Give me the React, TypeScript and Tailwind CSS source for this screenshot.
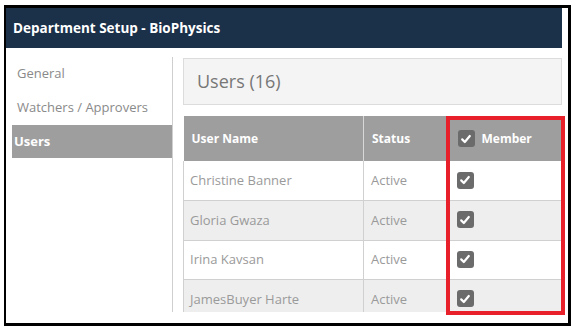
const users = [
  { name: "Christine Banner", status: "Active" },
  { name: "Gloria Gwaza", status: "Active" },
  { name: "Irina Kavsan", status: "Active" },
  { name: "JamesBuyer Harte", status: "Active" },
];

function CheckBox() {
  return (
    <span className="inline-flex h-[17px] w-[17px] items-center justify-center rounded-[3px] bg-[#6b6b6b]">
      <svg width="12" height="12" viewBox="0 0 12 12" fill="none">
        <path d="M2.2 6.4 L4.8 9 L9.8 3" stroke="white" strokeWidth="2.2" strokeLinecap="round" strokeLinejoin="round" />
      </svg>
    </span>
  );
}

export default function App() {
  return (
    <div className="relative h-[336px] w-[576px] overflow-hidden bg-white pl-[4px] pt-[5px] font-['Open_Sans',sans-serif]">
      <div className="h-[321px] w-[567px] border-b-[3px] border-l-2 border-r-[3px] border-t-[3px] border-black pr-[6px]">
        <div className="flex h-[40px] items-center bg-[#1b3049] pl-[7px] text-[13.5px] font-bold text-white">
          Department Setup - BioPhysics
        </div>

        <div className="flex h-[275px] pb-[11px] pt-[9px]">
          <div className="ml-[6px] w-[161px] border-r border-[#cfcfcf] text-[13px] text-[#8a8a8a]">
            <div className="flex h-[34px] items-center pl-[5px]">General</div>
            <div className="flex h-[34px] items-center pl-[5px]">Watchers / Approvers</div>
            <div className="flex h-[33px] items-center bg-[#9e9e9e] pl-[2px] font-bold text-white">Users</div>
          </div>

          <div className="ml-[10px] w-[379px] overflow-hidden pt-px">
            <div className="flex h-[47px] items-center border border-[#dcdcdc] bg-[#f4f4f4] pl-[13px] text-[18px] text-[#777]">
              Users (16)
            </div>

            <table className="mt-[11px] w-[379px] table-fixed border-collapse text-[13px]">
              <colgroup>
                <col className="w-[180px]" />
                <col className="w-[84px]" />
                <col className="w-[115px]" />
              </colgroup>
              <thead>
                <tr className="h-[45px] bg-[#9e9e9e] text-left text-[12px] font-bold text-white">
                  <th className="pl-[8px]">User Name</th>
                  <th className="border-l border-[#d8d8d8] pl-[8px]">Status</th>
                  <th className="pl-[10px]">
                    <span className="flex items-center gap-[7px]">
                      <CheckBox />
                      Member
                    </span>
                  </th>
                </tr>
              </thead>
              <tbody className="text-[#9a9a9a]">
                {users.map((u, i) => (
                  <tr
                    key={u.name}
                    className={`h-[39.5px] border-b border-[#d0d0d0] ${i % 2 === 1 ? "bg-[#eeeeee]" : "bg-white"}`}
                  >
                    <td className="border-l border-[#d0d0d0] pl-[6px]">{u.name}</td>
                    <td className="border-l border-[#d0d0d0] pl-[7px]">{u.status}</td>
                    <td className="pl-[9px] pt-[2px]">
                      <CheckBox />
                    </td>
                  </tr>
                ))}
              </tbody>
            </table>
          </div>
        </div>
      </div>

      <div className="absolute left-[446px] top-[116px] h-[199px] w-[119px] border-4 border-[#e8202a]" />
    </div>
  );
}
